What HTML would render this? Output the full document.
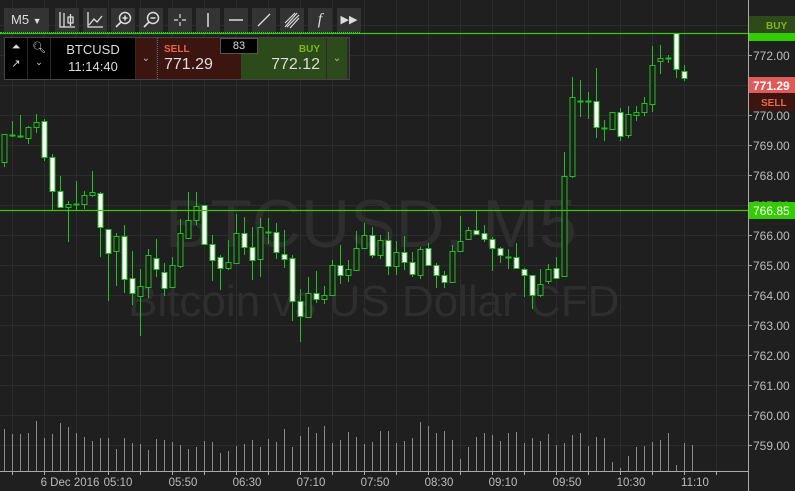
<!DOCTYPE html>
<html><head><meta charset="utf-8"><style>
html,body{margin:0;padding:0;background:#1f1f1f;width:795px;height:491px;overflow:hidden;font-family:"Liberation Sans",sans-serif}
#c{position:absolute;left:0;top:0}
.tb{position:absolute;top:8px;height:24px;background:#333;color:#ddd;font-size:13px;text-align:center;line-height:24px}
.p{position:absolute;top:38px;height:41px}
</style></head><body>
<svg id="c" width="795" height="491" xmlns="http://www.w3.org/2000/svg"></svg>
<div class="tb" style="left:4px;width:45px;text-align:left;padding-left:7px;box-sizing:border-box">M5 <span style="font-size:9px">▼</span></div>
<div class="tb" style="left:55px;width:24px">
<svg width="24" height="24"><path d="M5 4v15h15M9 5v14M13 9h5v6h-5zM15.5 6v12" stroke="#ddd" fill="none" stroke-width="1.3"/></svg></div>
<div class="tb" style="left:83px;width:24px"><svg width="24" height="24"><path d="M5 4v15h15M6 17l5-6 3 3 5-6" stroke="#ddd" fill="none" stroke-width="1.3"/></svg></div>
<div class="tb" style="left:111px;width:24px"><svg width="24" height="24"><circle cx="14" cy="10" r="5.5" stroke="#ddd" fill="none" stroke-width="1.5"/><path d="M10 14l-5 5M11.5 10h5M14 7.5v5" stroke="#ddd" stroke-width="1.6"/></svg></div>
<div class="tb" style="left:139px;width:24px"><svg width="24" height="24"><circle cx="14" cy="10" r="5.5" stroke="#ddd" fill="none" stroke-width="1.5"/><path d="M10 14l-5 5M11.5 10h5" stroke="#ddd" stroke-width="1.6"/></svg></div>
<div class="tb" style="left:168px;width:24px"><svg width="24" height="24"><path d="M12 6v4M12 14v4M6 12h4M14 12h4" stroke="#ddd" stroke-width="1.2"/></svg></div>
<div class="tb" style="left:196px;width:24px"><svg width="24" height="24"><path d="M12 5v14" stroke="#ddd" stroke-width="1.5"/></svg></div>
<div class="tb" style="left:224px;width:24px"><svg width="24" height="24"><path d="M5 12h14" stroke="#ddd" stroke-width="1.5"/></svg></div>
<div class="tb" style="left:252px;width:24px"><svg width="24" height="24"><path d="M6 18L18 6" stroke="#ddd" stroke-width="1.3"/></svg></div>
<div class="tb" style="left:280px;width:24px"><svg width="24" height="24"><path d="M5 15l10-10M7 19l12-12M5 19L17 5M10 20l9-10" stroke="#ddd" stroke-width="1.2"/></svg></div>
<div class="tb" style="left:308px;width:24px;font-family:'Liberation Serif',serif;font-style:italic;font-size:16px">f</div>
<div class="tb" style="left:337px;width:24px;font-size:11px">▶▶</div>
<div style="position:absolute;left:0;top:32px;width:360px;border-top:1px dotted #3c3"></div>
<div class="p" style="left:4px;width:344px;background:#2a2a2a;border:1px solid #444;top:37px"></div>
<div class="p" style="left:5px;width:22px;background:#000;color:#ddd;font-size:11px;text-align:center"><div style="margin-top:3px">⏶</div><div style="margin-top:3px">↗</div></div>
<div class="p" style="left:28px;width:22px;background:#000;color:#ddd;font-size:11px;text-align:center"><div style="margin-top:3px">🔍︎</div><div style="margin-top:3px;font-size:9px">⌄</div></div>
<div class="p" style="left:51px;width:84px;background:#000;color:#ddd;font-size:13px;text-align:center;line-height:17px"><div style="margin-top:3px">BTCUSD</div><div>11:14:40</div></div>
<div class="p" style="left:136px;width:20px;background:#3d1510;color:#bbb;font-size:10px;text-align:center;line-height:41px">⌄</div>
<div class="p" style="left:157px;width:83px;background:#3d1510;border-left:1px dotted #666"><div style="color:#e5674d;font-size:10px;font-weight:bold;margin:6px 0 0 6px">SELL</div><div style="color:#ddd;font-size:16px;margin:1px 0 0 6px">771.29</div></div>
<div class="p" style="left:241px;width:85px;background:#2c4a1a"><div style="color:#7fb51a;font-size:10px;font-weight:bold;text-align:right;margin:6px 6px 0 0">BUY</div><div style="color:#ddd;font-size:16px;text-align:right;margin:1px 6px 0 0">772.12</div></div>
<div class="p" style="left:327px;width:20px;background:#2c4a1a;color:#bbb;font-size:10px;text-align:center;line-height:41px">⌄</div>
<div style="position:absolute;left:220px;top:38px;width:38px;height:16px;background:#000;border:1px solid #555;box-sizing:border-box;color:#ddd;font-size:11px;text-align:center;line-height:14px">83</div>
<script>
var s=document.getElementById('c'),h='';
function L(x1,y1,x2,y2,c,w){h+='<line x1="'+x1+'" y1="'+y1+'" x2="'+x2+'" y2="'+y2+'" stroke="'+c+'" stroke-width="'+(w||1)+'"/>';}
function R(x,y,w,hh,f,st){h+='<rect x="'+x+'" y="'+y+'" width="'+w+'" height="'+hh+'" fill="'+f+'"'+(st?' stroke="'+st+'"':'')+'/>';}
function T(x,y,t,c,sz,a,ex){h+='<text x="'+x+'" y="'+y+'" fill="'+c+'" font-size="'+sz+'" text-anchor="'+(a||'start')+'" '+(ex||'')+'>'+t+'</text>';}
for(var x=12.5;x<748;x+=32)L(x,0,x,471,'#2c2c2c');
for(var y=25.5;y<471;y+=30)L(0,y,748,y,'#2c2c2c');
T(165,247,'BTCUSD, M5','#2e2e2e',68);
T(128,316,'Bitcoin vs US Dollar CFD','#2e2e2e',44);
var d=[[134,162,134,167,0],[135,135,121,137,0],[136,136,115,138,0],[127,138,126,144,0],[122,127,114,133,0],[121,157,119,161,1],[157,191,154,210,1],[191,207,176,207,1],[204,207,201,242,0],[204,204,181,211,0],[195,204,191,209,0],[192,195,171,197,0],[193,227,192,257,1],[229,253,229,301,1],[236,251,233,286,0],[236,279,225,293,1],[278,293,251,305,1],[286,296,269,336,0],[255,287,249,298,0],[258,269,239,277,1],[272,288,263,296,1],[265,287,257,288,0],[233,266,219,268,0],[220,238,192,238,0],[206,220,192,225,0],[205,244,205,244,1],[244,260,235,281,1],[257,268,255,290,1],[262,268,240,270,0],[233,263,214,263,0],[233,247,217,255,1],[247,260,227,280,1],[227,259,218,277,0],[232,232,218,244,0],[232,252,223,259,1],[254,259,230,268,1],[258,301,255,321,1],[301,316,289,342,1],[293,317,277,317,0],[293,299,271,303,1],[295,299,286,304,0],[265,295,260,295,0],[265,275,245,284,1],[269,275,260,282,0],[248,270,231,270,0],[235,248,223,248,0],[235,255,227,258,1],[240,255,235,259,0],[240,266,232,275,1],[252,266,241,275,0],[252,262,236,270,1],[262,274,252,277,1],[249,275,247,279,0],[248,265,243,266,1],[265,275,263,288,1],[275,282,271,288,1],[251,282,245,282,0],[241,251,216,251,0],[230,239,227,240,0],[230,234,211,235,1],[233,239,225,242,1],[239,248,237,271,1],[248,255,247,263,1],[257,257,249,269,0],[257,268,243,268,1],[269,275,268,297,1],[275,295,275,309,1],[284,295,269,297,0],[269,281,264,284,0],[268,278,257,278,1],[176,276,152,276,0],[97,176,77,178,0],[101,101,80,117,0],[101,101,92,119,0],[101,127,68,138,1],[128,128,120,141,0],[112,129,112,129,0],[112,136,108,141,1],[114,135,106,138,0],[112,115,106,121,0],[103,112,97,116,0],[65,104,46,112,0],[58,61,45,74,0],[58,58,55,63,0],[33,69,33,78,1],[71,78,65,81,1]];
var g='#1fbf1f';
d.forEach(function(c,i){var x=4.5+8*i;L(x,c[2],x,c[3],g);if(c[1]-c[0]<2){L(x-3,c[0]+.5,x+3,c[0]+.5,g,2);}else R(x-2.5,c[0]+.5,5,c[1]-c[0],c[4]?'#fff':'#1f1f1f',g);});
var v=[429,434,434,433,421,438,434,423,427,433,437,441,438,438,449,438,443,444,450,439,440,442,445,449,447,441,442,453,451,446,444,440,447,439,442,429,447,436,427,433,426,443,440,432,437,444,442,431,431,443,441,438,422,426,433,431,440,459,447,437,433,435,441,433,432,443,438,441,434,445,443,435,433,446,437,438,462,468,456,447,446,442,440,433,465,443,445];
v.forEach(function(t,i){var x=4+8*i+.5;L(x,t,x,471,'#8a8a8a');});
L(0,471.5,748,471.5,'#aaa');
for(var x=12.5;x<748;x+=32)L(x,471,x,475,'#aaa');
L(748.5,0,748.5,491,'#aaa');
[['6 Dec 2016',70],['05:10',118],['05:50',183],['06:30',247],['07:10',311],['07:50',375],['08:30',439],['09:10',503],['09:50',567],['10:30',631],['11:10',695]].forEach(function(a){T(a[1],486,a[0],'#bbb',11.5,'middle');});
for(var p=772;p>=759;p--){var y=115-(p-770)*30;L(748,y+.5,752,y+.5,'#aaa');T(753,y+5,p+'.00','#bbb',12);}
L(0,33.5,748,33.5,'#33cc00',1.2);L(0,210.5,748,210.5,'#33cc00',1.2);
R(749,16,46,17,'#2f4a1a');T(766,29,'BUY','#7fb51a',10,'start','font-weight="bold"');
R(749,33,46,8,'#33cc00');
R(749,77,46,16,'#e05a5a');T(753,90,'771.29','#fff',12,'start','font-weight="bold"');
R(749,93,46,18,'#3d1510');T(761,106,'SELL','#e5674d',10,'start','font-weight="bold"');
R(749,202,46,17,'#33cc00');T(753,215,'766.85','#fff',12);
s.innerHTML=h;
</script>
</body></html>
